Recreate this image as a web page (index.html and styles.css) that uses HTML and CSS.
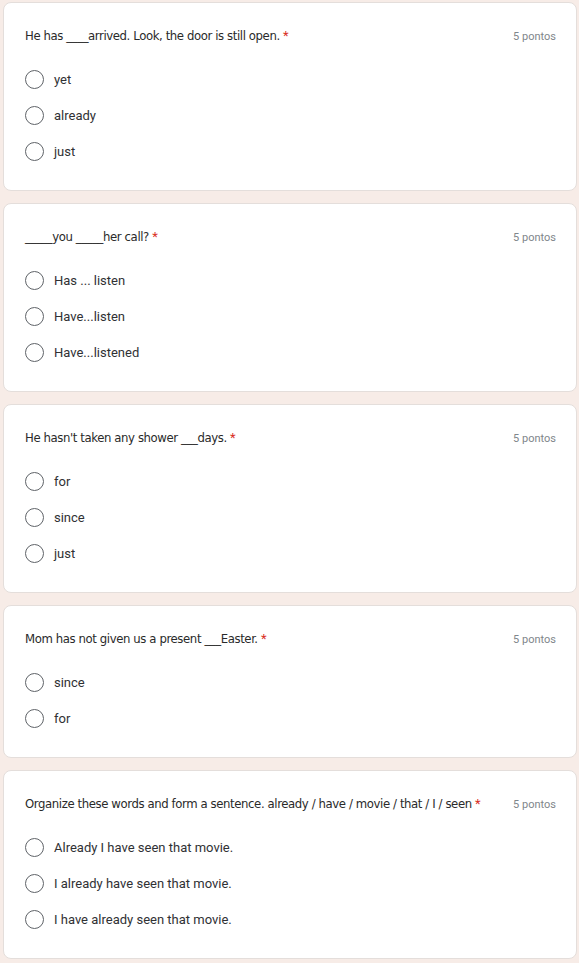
FILE: index.html
```html
<!DOCTYPE html>
<html lang="pt">
<head>
<meta charset="utf-8">
<title>Form</title>
<link rel="stylesheet" href="styles.css">
</head>
<body>
<main class="form">
  <section class="card">
    <div class="head">
      <div class="title">He has ____arrived. Look, the door is still open. <span class="req">*</span></div>
      <div class="points">5 pontos</div>
    </div>
    <div class="options">
      <label class="opt"><span class="radio"></span><span class="txt">yet</span></label>
      <label class="opt"><span class="radio"></span><span class="txt">already</span></label>
      <label class="opt"><span class="radio"></span><span class="txt">just</span></label>
    </div>
  </section>
  <section class="card">
    <div class="head">
      <div class="title">_____you _____her call? <span class="req">*</span></div>
      <div class="points">5 pontos</div>
    </div>
    <div class="options">
      <label class="opt"><span class="radio"></span><span class="txt">Has ... listen</span></label>
      <label class="opt"><span class="radio"></span><span class="txt">Have...listen</span></label>
      <label class="opt"><span class="radio"></span><span class="txt">Have...listened</span></label>
    </div>
  </section>
  <section class="card">
    <div class="head">
      <div class="title">He hasn't taken any shower ___days. <span class="req">*</span></div>
      <div class="points">5 pontos</div>
    </div>
    <div class="options">
      <label class="opt"><span class="radio"></span><span class="txt">for</span></label>
      <label class="opt"><span class="radio"></span><span class="txt">since</span></label>
      <label class="opt"><span class="radio"></span><span class="txt">just</span></label>
    </div>
  </section>
  <section class="card">
    <div class="head">
      <div class="title">Mom has not given us a present ___Easter. <span class="req">*</span></div>
      <div class="points">5 pontos</div>
    </div>
    <div class="options">
      <label class="opt"><span class="radio"></span><span class="txt">since</span></label>
      <label class="opt"><span class="radio"></span><span class="txt">for</span></label>
    </div>
  </section>
  <section class="card">
    <div class="head">
      <div class="title">Organize these words and form a sentence. already / have / movie / that / I / seen <span class="req">*</span></div>
      <div class="points">5 pontos</div>
    </div>
    <div class="options">
      <label class="opt"><span class="radio"></span><span class="txt">Already I have seen that movie.</span></label>
      <label class="opt"><span class="radio"></span><span class="txt">I already have seen that movie.</span></label>
      <label class="opt"><span class="radio"></span><span class="txt">I have already seen that movie.</span></label>
    </div>
  </section>
</main>
</body>
</html>
```
FILE: styles.css
```css
html, body {
  margin: 0;
  padding: 0;
  background: #f7ece7;
}
body {
  font-family: Roboto, "Liberation Sans", Arial, sans-serif;
  color: #202124;
}
.form {
  display: flex;
  flex-direction: column;
  gap: 12px;
  padding: 2px 2px 0 3px;
}
.card {
  background: #fff;
  border: 1px solid #e4dedb;
  border-radius: 8px;
  padding: 23px 20px 21px 21px;
}
.head {
  display: flex;
  justify-content: space-between;
  align-items: center;
  gap: 12px;
  height: 20px;
  margin-bottom: 15px;
}
.title {
  font-family: "DejaVu Sans Condensed", "DejaVu Sans", sans-serif;
  font-stretch: condensed;
  font-size: 13px;
  letter-spacing: -0.4px;
  line-height: 20px;
  color: #2a2a2a;
  white-space: nowrap;
}
.req {
  color: #d93025;
  font-family: Roboto, sans-serif;
  font-size: 13px;
  letter-spacing: 0;
}
.points {
  font-size: 11px;
  color: #80868b;
  white-space: nowrap;
}
.options {
  display: flex;
  flex-direction: column;
}
.opt {
  display: flex;
  align-items: center;
  height: 36px;
}
.radio {
  box-sizing: border-box;
  width: 19px;
  height: 19px;
  border: 1.5px solid #5f6368;
  border-radius: 50%;
  flex: none;
}
.txt {
  margin-left: 10px;
  font-size: 13px;
  color: #303134;
}
```
